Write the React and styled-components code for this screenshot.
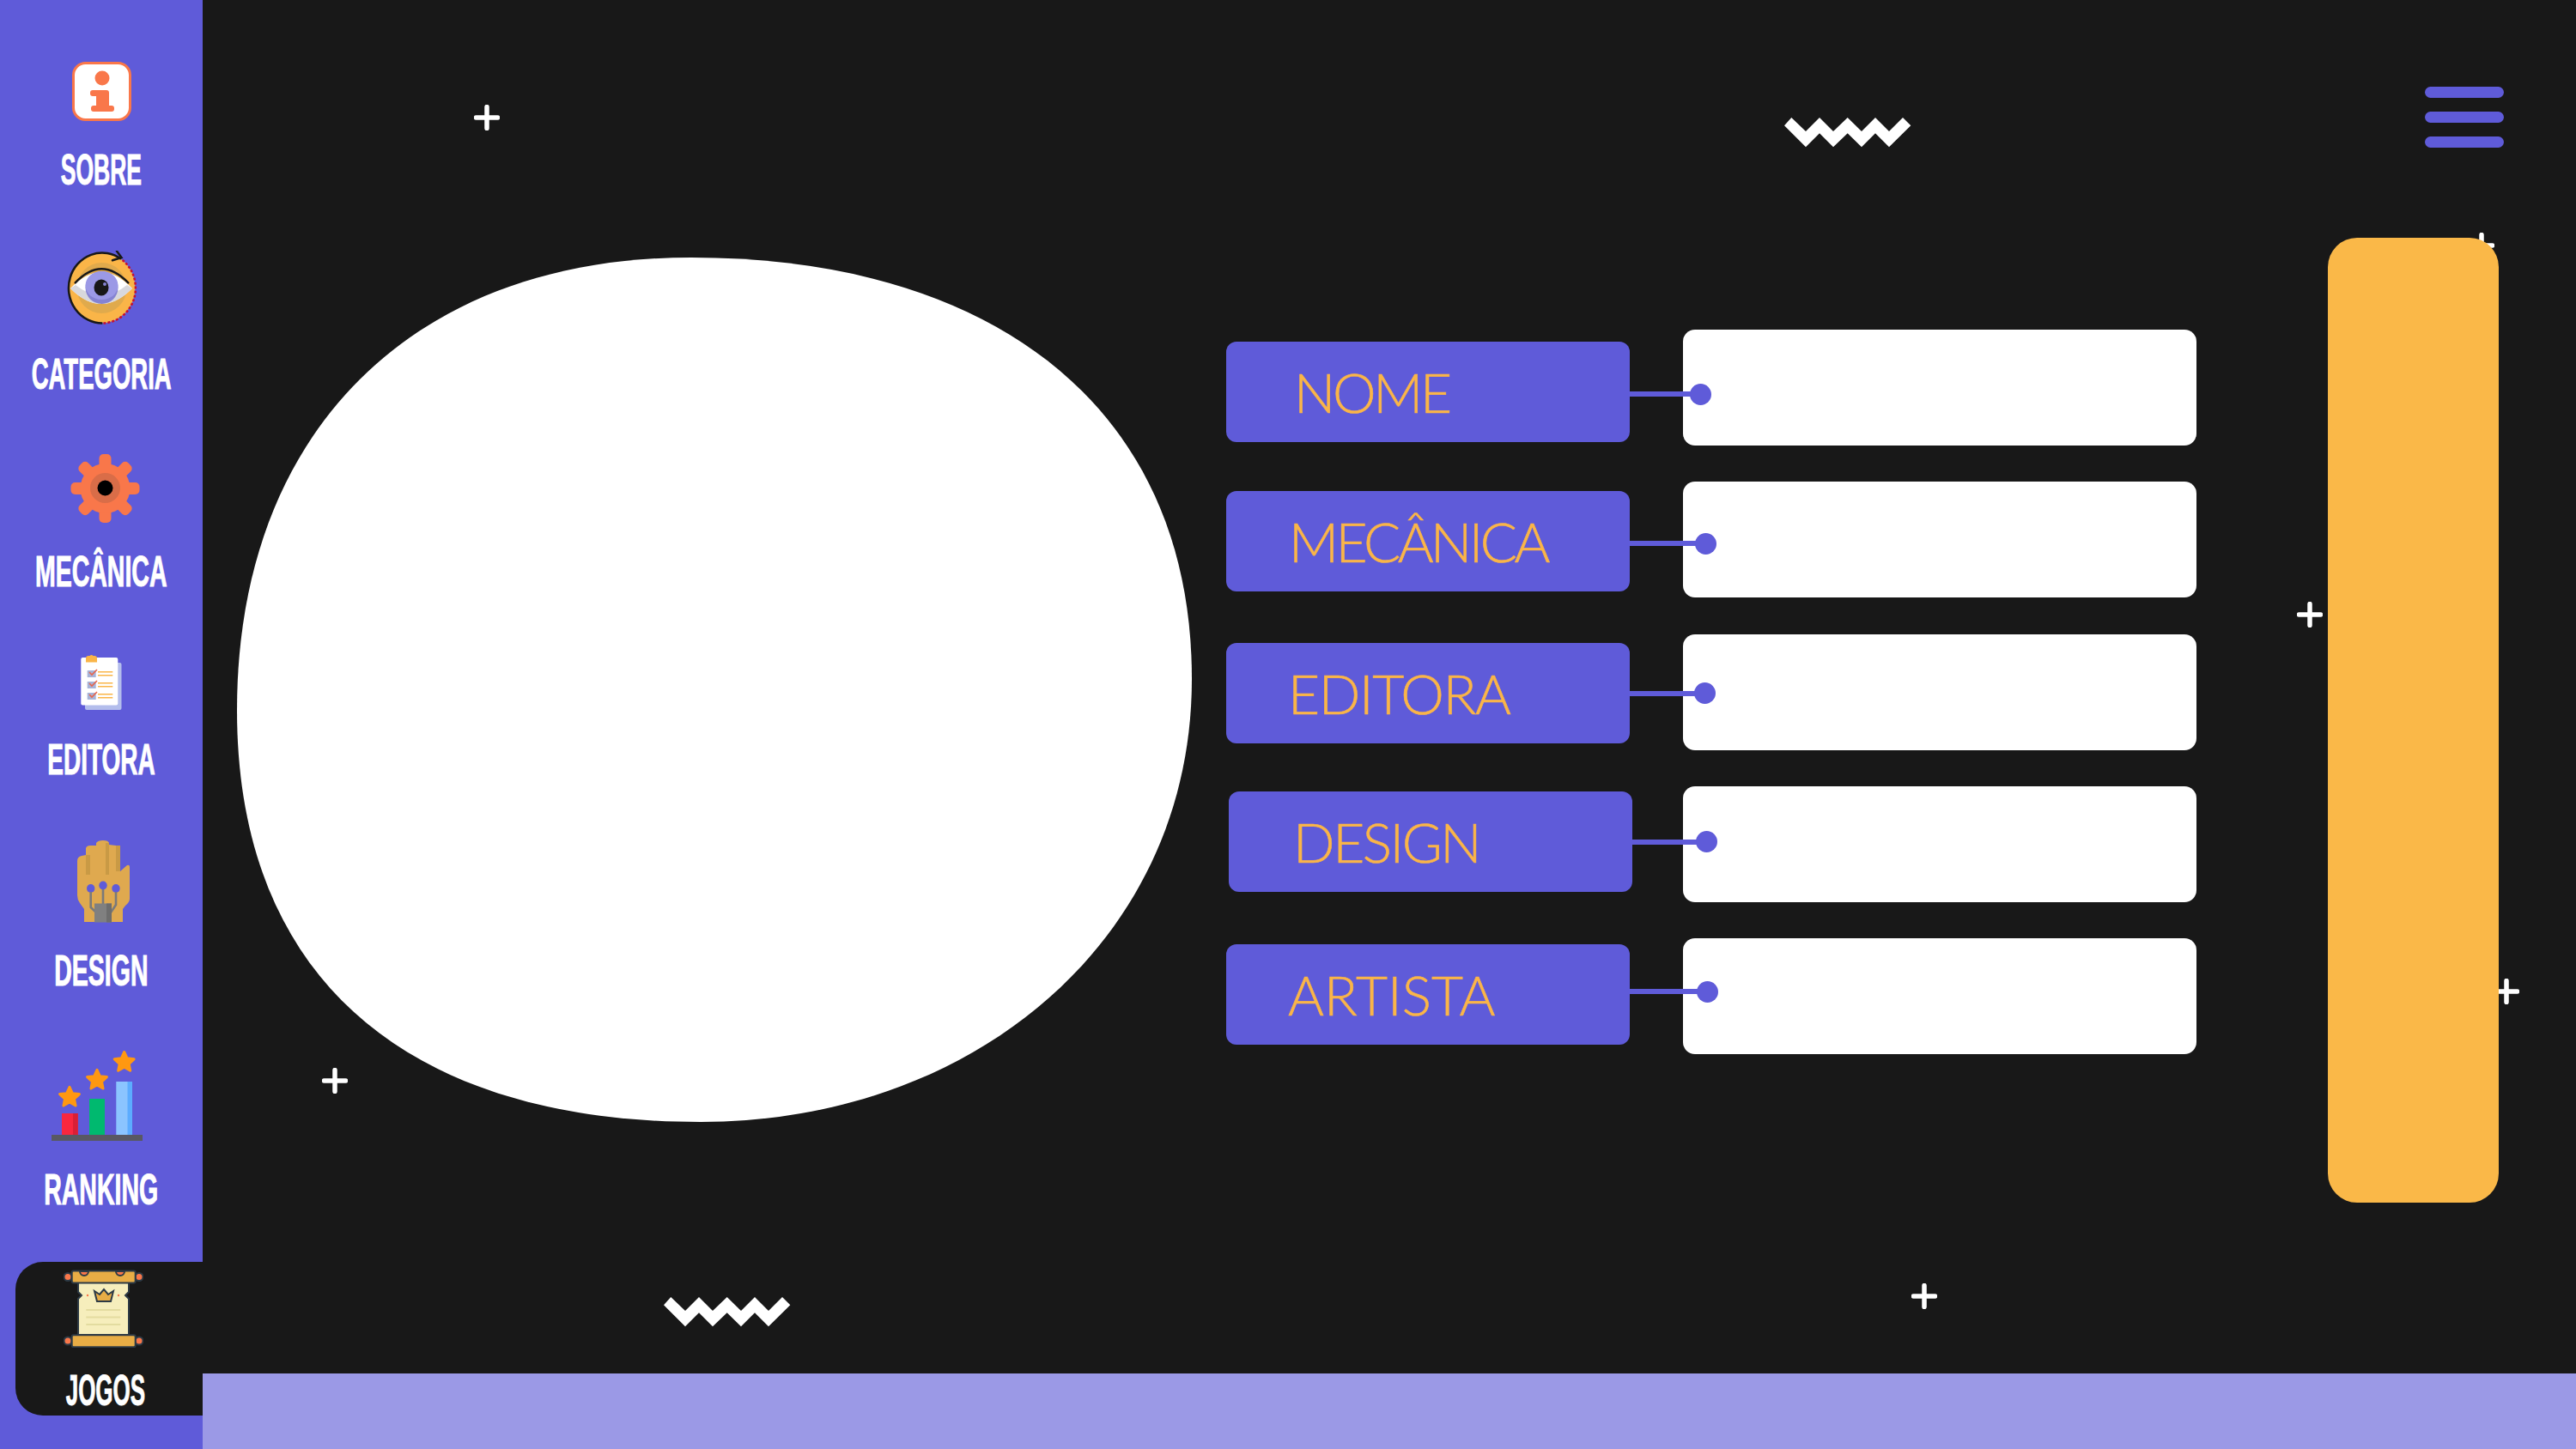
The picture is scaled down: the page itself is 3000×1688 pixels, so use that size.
import React from 'react';
import styled, { createGlobalStyle } from 'styled-components';

const GlobalStyle = createGlobalStyle`
  html, body {
    margin: 0;
    padding: 0;
    background: #181818;
  }
`;

const Page = styled.div`
  display: flex;
  width: 3000px;
  height: 1688px;
  overflow: hidden;
  background: #181818;
`;

const Sidebar = styled.nav`
  display: flex;
  flex-direction: column;
  width: 236px;
  flex: none;
  padding-top: 72px;
  box-sizing: border-box;
  background: #5f5bd9;
`;

const NavItem = styled.div`
  display: flex;
  flex-direction: column;
  align-items: center;
  margin-bottom: ${(p) => p.$after}px;
`;

const NavIcon = styled.div`
  display: flex;
  width: ${(p) => p.$w}px;
  height: ${(p) => p.$h}px;
  margin-left: ${(p) => p.$shift || 0}px;
  margin-bottom: ${(p) => p.$gap}px;
`;

const NavLabel = styled.span`
  display: block;
  height: 36px;
  line-height: 36px;
  font-family: "Liberation Sans", sans-serif;
  font-weight: 700;
  font-size: 50px;
  color: #fff;
  white-space: nowrap;
  -webkit-text-stroke: 1px #fff;
  transform: scaleX(${(p) => p.$squeeze});
`;

const ActiveTab = styled.div`
  display: flex;
  flex-direction: column;
  align-items: center;
  width: 219px;
  height: 179px;
  margin-left: 18px;
  padding: 8px 10px 0 0;
  box-sizing: border-box;
  border-radius: 32px 0 0 32px;
  background: #181818;
`;

const Main = styled.main`
  position: relative;
  display: flex;
  flex-direction: column;
  flex: 1;
`;

const TopBar = styled.header`
  display: flex;
  justify-content: flex-end;
  height: 277px;
  padding: 101px 84px 0 0;
  box-sizing: border-box;
`;

const Burger = styled.div`
  display: flex;
  flex-direction: column;
  gap: 16px;
  width: 92px;
`;

const BurgerBar = styled.span`
  display: block;
  height: 13px;
  border-radius: 7px;
  background: #5f5bd9;
`;

const Content = styled.section`
  position: relative;
  display: flex;
  align-items: flex-start;
  padding-left: 40px;
`;

const Blob = styled.svg`
  width: 1112px;
  height: 1007px;
  margin-top: 23px;
  flex: none;
`;

const Form = styled.div`
  display: flex;
  flex-direction: column;
  gap: 42.25px;
  width: 1130px;
  margin: 107px 0 0 40px;
  flex: none;
`;

const Row = styled.div`
  display: flex;
  align-items: flex-start;
  justify-content: space-between;
  height: 135px;
`;

const Tag = styled.div`
  position: relative;
  display: flex;
  align-items: center;
  width: 470px;
  height: 117px;
  margin: ${(p) => p.$top}px 0 0 ${(p) => p.$left || 0}px;
  padding-left: ${(p) => p.$pad}px;
  box-sizing: border-box;
  border-radius: 12px;
  background: #5f5bd9;
`;

const TagText = styled.span`
  font-family: "Lato", "Open Sans", sans-serif;
  font-weight: 300;
  font-size: 64px;
  letter-spacing: ${(p) => p.$spacing}px;
  color: #fab548;
  white-space: nowrap;
  -webkit-text-stroke: 0.6px #fab548;
`;

const Connector = styled.span`
  position: absolute;
  left: 100%;
  top: ${(p) => p.$y - 3}px;
  width: ${(p) => p.$reach}px;
  height: 6px;
  background: #5f5bd9;

  &::after {
    content: '';
    position: absolute;
    right: -12px;
    top: -9.5px;
    width: 25px;
    height: 25px;
    border-radius: 50%;
    background: #5f5bd9;
  }
`;

const Field = styled.div`
  width: 598px;
  height: 135px;
  border-radius: 14px;
  background: #fff;
`;

const OrangePanel = styled.aside`
  position: relative;
  width: 199px;
  height: 1124px;
  margin-left: 153px;
  flex: none;
  border-radius: 34px;
  background: #fab848;
`;

const BottomBar = styled.footer`
  height: 88px;
  margin-top: auto;
  background: #9b99e6;
`;

const Plus = styled.svg`
  position: absolute;
  left: ${(p) => p.$x - 236 - 15}px;
  top: ${(p) => p.$y - 15}px;
  width: 30px;
  height: 30px;
`;

const Zigzag = styled.svg`
  position: absolute;
  left: ${(p) => p.$x - 236}px;
  top: ${(p) => p.$y}px;
  width: 148px;
  height: 35px;
`;

const InfoIcon = () => (
  <svg viewBox="0 0 69 69" width="69" height="69">
    <rect x="1.5" y="1.5" width="66" height="66" rx="14" fill="#fff" stroke="#f9774a" strokeWidth="3" />
    <circle cx="35" cy="19" r="8.5" fill="#f9774a" />
    <path
      d="M24 33H40a3 3 0 0 1 3 3V51H46a3 3 0 0 1 3 3v1a3 3 0 0 1-3 3H25a3 3 0 0 1-3-3v-1a3 3 0 0 1 3-3h3V40H24a3 3 0 0 1-3-3v-1a3 3 0 0 1 3-3z"
      fill="#f9774a"
    />
  </svg>
);

const EyeIcon = () => (
  <svg viewBox="0 0 81 86" width="81" height="86">
    <ellipse cx="40.5" cy="43.3" rx="39" ry="41" fill="#fab548" />
    <ellipse cx="40.5" cy="43.5" rx="29" ry="29.5" fill="#e0aa4c" />
    <path d="M4 44Q40 6 76 44Q40 80 4 44z" fill="#fff" />
    <path d="M4 44Q40 80 76 44L70 40Q40 64 10 40z" fill="#d8d8dc" />
    <circle cx="40.5" cy="43" r="19" fill="#8583d2" />
    <ellipse cx="40.5" cy="40.5" rx="19" ry="16.5" fill="#9b99e6" />
    <ellipse cx="40" cy="43" rx="8.5" ry="9.5" fill="#181818" />
    <circle cx="44" cy="39" r="2" fill="#8583d2" />
    <path d="M9.7 37.3Q40 5 71.3 37.3" fill="none" stroke="#181818" strokeWidth="2.5" strokeLinecap="round" />
    <path d="M41.3 84.5A39 41 0 1 1 63 9.7" fill="none" stroke="#181818" strokeWidth="2.5" />
    <path d="M58 0.5L63.5 8L53 11.3" fill="none" stroke="#181818" strokeWidth="2.5" strokeLinecap="round" />
    <path d="M64.7 11A39 41 0 0 1 41.3 84.5" fill="none" stroke="#c8102e" strokeWidth="2.5" strokeDasharray="3 2" />
  </svg>
);

const GearIcon = () => (
  <svg viewBox="0 0 81 80" width="81" height="80">
    {[0, 45, 90, 135, 180, 225, 270, 315].map((a) => (
      <rect key={a} x="33.5" y="0" width="14" height="24" rx="5" fill="#f9774a" transform={`rotate(${a} 40.5 40)`} />
    ))}
    <circle cx="40.5" cy="40" r="29" fill="#f9774a" />
    <circle cx="40.5" cy="39.5" r="17.5" fill="#d96d48" />
    <circle cx="40.5" cy="39.5" r="9" fill="#000" />
  </svg>
);

const ClipboardIcon = () => (
  <svg viewBox="0 0 48 68" width="48" height="68">
    <rect x="5" y="12" width="42.5" height="55" rx="2" fill="#b3bdec" />
    <rect x="0.3" y="6" width="43" height="55.5" rx="2" fill="#fff" />
    <path d="M6 11.5V7a3 3 0 0 1 3-3h1.5a2.5 2.5 0 0 1 4 0H16a3 3 0 0 1 3 3v4.5z" fill="#fab548" />
    {[0, 13, 26].map((dy) => (
      <g key={dy} transform={`translate(0 ${dy})`}>
        <rect x="7.7" y="21" width="10" height="8" fill="#a7b4d8" />
        <path d="M10 23L13 26L19 20" fill="none" stroke="#e8654a" strokeWidth="1.6" />
        <path d="M20 22.7H37.3M20 26.7H37.3" stroke="#fab548" strokeWidth="1.6" />
      </g>
    ))}
  </svg>
);

const HandIcon = () => (
  <svg viewBox="0 0 61 96" width="61" height="96">
    <path
      d="M0 24Q0 19 5 18L10 17V9Q11 6 15 6L22 6V3Q24 0 30 0Q36 0 37 3V5L45 6Q50 7 50 11V36L58 29Q61 28 61 31V68Q61 72 56 76L53 80V95H8V80L3 73Q0 69 0 64z"
      fill="#dfa94f"
    />
    <path d="M10 17H15V40H10zM33 3H37V40H33zM45 6H50V36H45z" fill="#c99a45" />
    <ellipse cx="15.7" cy="56" rx="4.7" ry="5" fill="#5f5bd9" />
    <ellipse cx="30" cy="52.5" rx="4.7" ry="5" fill="#5f5bd9" />
    <ellipse cx="45" cy="56" rx="4.7" ry="5" fill="#5f5bd9" />
    <path d="M15.7 60V78L22 84M30 57V76M45 60V75L39 84" fill="none" stroke="#7a7a7a" strokeWidth="2.6" />
    <rect x="20" y="73.5" width="20" height="22" fill="#808080" />
    <rect x="34" y="73.5" width="6" height="22" fill="#6d6d6d" />
  </svg>
);

const starPoints = (cx, cy, r) =>
  Array.from({ length: 10 }, (_, i) => {
    const radius = i % 2 ? r * 0.48 : r;
    const angle = (Math.PI / 5) * i - Math.PI / 2;
    return `${cx + radius * Math.cos(angle)},${cy + radius * Math.sin(angle)}`;
  }).join(' ');

const RankingIcon = () => (
  <svg viewBox="0 0 106 106" width="106" height="106">
    <rect x="12" y="73" width="18.7" height="25" fill="#f9273f" />
    <rect x="25" y="73" width="5.7" height="25" fill="#d81f36" />
    <rect x="44" y="56" width="18" height="42" fill="#00b96f" />
    <rect x="75.3" y="36" width="18.7" height="62" fill="#8bc4ff" />
    <rect x="88.5" y="36" width="5.5" height="62" fill="#5cacff" />
    <rect x="0" y="98" width="106" height="7" fill="#585862" />
    {[[21, 54.3], [53, 34.3], [84.7, 13.5]].map(([x, y]) => (
      <polygon key={x} points={starPoints(x, y, 12)} fill="#ff9811" stroke="#ff9811" strokeWidth="3" strokeLinejoin="round" />
    ))}
  </svg>
);

const ScrollIcon = () => (
  <svg viewBox="0 0 93 92" width="93" height="92">
    <g stroke="#2d3a45" strokeWidth="2">
      <path d="M26 77Q46 88 68 77z" fill="#f9774a" />
      <path d="M17 16H76V27L72 31L76 35V77H17V35L21 31L17 27z" fill="#f6eebc" />
      <circle cx="5" cy="9.5" r="4.5" fill="#f9774a" />
      <circle cx="88" cy="9.5" r="4.5" fill="#f9774a" />
      <circle cx="5" cy="84" r="4.5" fill="#f9774a" />
      <circle cx="88" cy="84" r="4.5" fill="#f9774a" />
      <rect x="9.7" y="2.6" width="74" height="14" rx="2" fill="#e8ad45" />
      <rect x="9.7" y="77.3" width="74" height="14" rx="2" fill="#e8ad45" />
      <path d="M19 3A5 5 0 0 0 29 3zM61 3A5 5 0 0 0 71 3z" fill="#f9774a" />
      <path d="M36 26L42 30L47 24L52 30L58 26L55 38H39z" fill="#e8ad45" />
    </g>
    <path d="M26.3 48H66.3M26.3 56.5H66.3M26.3 65H66.3" stroke="#e3dca0" strokeWidth="2" />
    <circle cx="28" cy="31" r="1.2" fill="#f9774a" />
    <circle cx="64" cy="31" r="1.2" fill="#f9774a" />
  </svg>
);

const PlusSign = ({ x, y }) => (
  <Plus $x={x} $y={y} viewBox="0 0 30 30">
    <path d="M15 2.5V27.5M2.5 15H27.5" stroke="#fff" strokeWidth="5.5" strokeLinecap="round" />
  </Plus>
);

const ZigzagLine = ({ x, y }) => (
  <Zigzag $x={x} $y={y} viewBox="0 0 148 35">
    <polygon
      points="0,9.3 8.3,0 25,16 41,0 57,16 73.7,0 90,16 106,0 122,16 138,0 147.3,9.3 122,34.3 106,18.3 90,34.3 73.7,18.3 57,34.3 41,18.3 25,34.3"
      fill="#fff"
    />
  </Zigzag>
);

const navItems = [
  { label: 'SOBRE', icon: <InfoIcon />, w: 69, h: 69, gap: 39, after: 76, squeeze: 0.53 },
  { label: 'CATEGORIA', icon: <EyeIcon />, w: 81, h: 86, gap: 40, after: 75, squeeze: 0.55 },
  { label: 'MECÂNICA', icon: <GearIcon />, w: 81, h: 80, gap: 39, after: 76, shift: 9, squeeze: 0.57 },
  { label: 'EDITORA', icon: <ClipboardIcon />, w: 48, h: 68, gap: 39, after: 76, squeeze: 0.56 },
  { label: 'DESIGN', icon: <HandIcon />, w: 61, h: 96, gap: 38, after: 75, shift: 5, squeeze: 0.57 },
  { label: 'RANKING', icon: <RankingIcon />, w: 106, h: 106, gap: 38, after: 66, shift: -10, squeeze: 0.57 },
];

const fields = [
  { label: 'NOME', top: 14, pad: 79, y: 61, reach: 83, spacing: -3.4 },
  { label: 'MECÂNICA', top: 11, pad: 73, y: 61, reach: 89, spacing: -3.6 },
  { label: 'EDITORA', top: 10, pad: 72, y: 59, reach: 88, spacing: -1.4 },
  { label: 'DESIGN', top: 6, left: 3, pad: 75, y: 59, reach: 87, spacing: -2.5 },
  { label: 'ARTISTA', top: 7, pad: 72, y: 55, reach: 91, spacing: 0 },
];

export default function App() {
  return (
    <>
      <GlobalStyle />
      <Page>
        <Sidebar>
          {navItems.map((item) => (
            <NavItem key={item.label} $after={item.after}>
              <NavIcon $w={item.w} $h={item.h} $gap={item.gap} $shift={item.shift}>
                {item.icon}
              </NavIcon>
              <NavLabel $squeeze={item.squeeze}>{item.label}</NavLabel>
            </NavItem>
          ))}
          <ActiveTab>
            <NavIcon $w={93} $h={92} $gap={32} $shift={-5}>
              <ScrollIcon />
            </NavIcon>
            <NavLabel $squeeze={0.52}>JOGOS</NavLabel>
          </ActiveTab>
        </Sidebar>
        <Main>
          <PlusSign x={567} y={137} />
          <PlusSign x={390} y={1259} />
          <PlusSign x={2241} y={1510} />
          <PlusSign x={2690} y={716} />
          <PlusSign x={2890} y={286} />
          <PlusSign x={2919} y={1155} />
          <ZigzagLine x={2078} y={137} />
          <ZigzagLine x={773} y={1511} />
          <TopBar>
            <Burger>
              <BurgerBar />
              <BurgerBar />
              <BurgerBar />
            </Burger>
          </TopBar>
          <Content>
            <Blob viewBox="22 30 1530 1518" preserveAspectRatio="none">
              <path
                d="M750 30C1230 30 1552 290 1552 770C1552 1230 1200 1548 765 1548C300 1548 22 1300 22 825C22 340 300 30 750 30Z"
                fill="#fff"
              />
            </Blob>
            <Form>
              {fields.map((f) => (
                <Row key={f.label}>
                  <Tag $top={f.top} $left={f.left} $pad={f.pad}>
                    <TagText $spacing={f.spacing}>{f.label}</TagText>
                    <Connector $y={f.y} $reach={f.reach} />
                  </Tag>
                  <Field />
                </Row>
              ))}
            </Form>
            <OrangePanel />
          </Content>
          <BottomBar />
        </Main>
      </Page>
    </>
  );
}
